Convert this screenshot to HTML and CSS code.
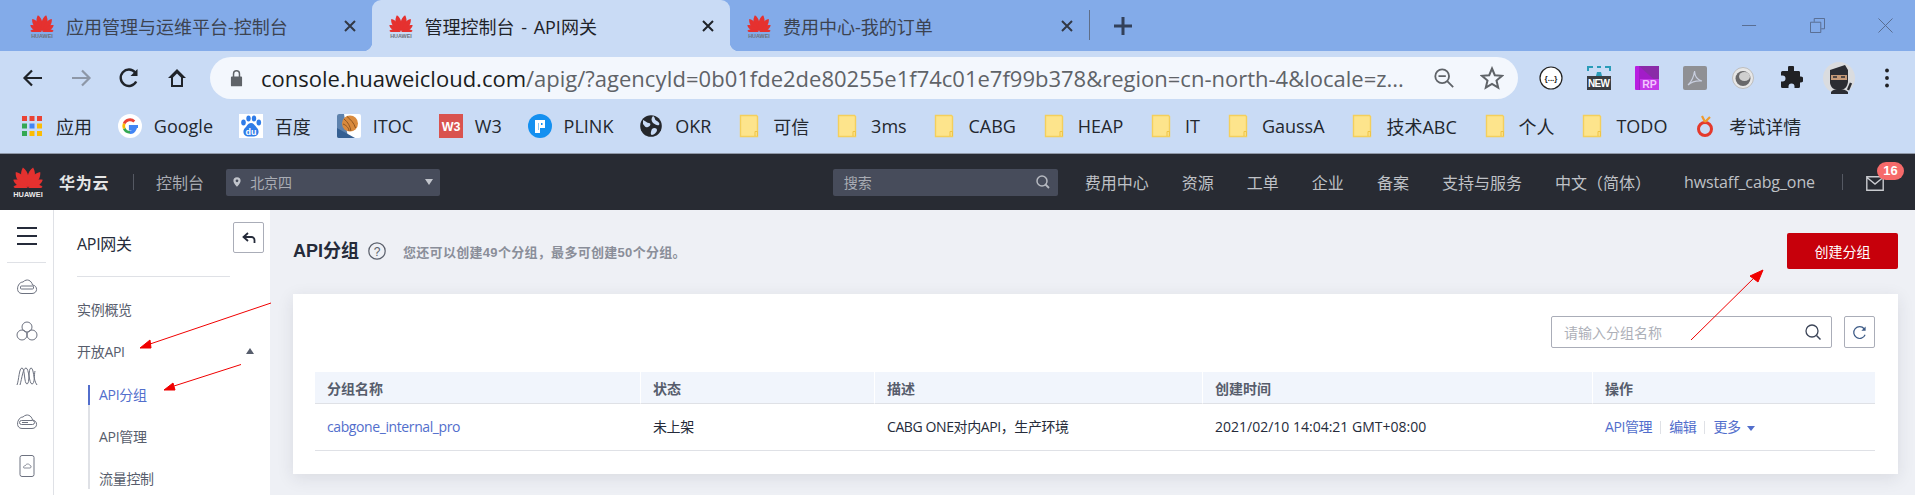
FILE: index.html
```html
<!DOCTYPE html>
<html lang="zh-CN">
<head>
<meta charset="utf-8">
<title>管理控制台 - API网关</title>
<link rel="stylesheet" href="styles.css">
</head>
<body>
<svg class="defs" width="0" height="0" aria-hidden="true">
  <defs>
    <symbol id="petals" viewBox="0 0 24 17">
      <g fill="#e5312f">
        <path d="M12 16.600C8.800 12.500 7.800 8.600 8.400 5.400 8.800 3.300 9.700 1.600 10.800 .4 12.800 2.400 13.900 4.900 13.800 7.800 13.700 10.800 12.800 14 12 16.600Z" transform="rotate(-10 12 17)"/>
        <path d="M12 16.600C8.800 12.500 7.800 8.600 8.400 5.400 8.800 3.300 9.700 1.600 10.800 .4 12.800 2.400 13.900 4.900 13.800 7.800 13.700 10.800 12.800 14 12 16.600Z" transform="rotate(-34 12 17) translate(12 17) scale(.95) translate(-12 -17)"/>
        <path d="M12 16.600C8.800 12.500 7.800 8.600 8.400 5.400 8.800 3.300 9.700 1.600 10.800 .4 12.800 2.400 13.900 4.900 13.800 7.800 13.700 10.800 12.800 14 12 16.600Z" transform="rotate(-58 12 17) translate(12 17) scale(.8) translate(-12 -17)"/>
        <path d="M12 16.600C8.800 12.500 7.800 8.600 8.400 5.400 8.800 3.300 9.700 1.600 10.800 .4 12.800 2.400 13.900 4.900 13.800 7.800 13.700 10.800 12.800 14 12 16.600Z" transform="rotate(-82 12 17) translate(12 17) scale(.7) translate(-12 -17)"/>
        <path d="M12 16.600C15.200 12.500 16.200 8.600 15.600 5.400 15.200 3.300 14.300 1.600 13.200 .4 11.200 2.400 10.100 4.900 10.200 7.800 10.300 10.800 11.200 14 12 16.600Z" transform="rotate(10 12 17)"/>
        <path d="M12 16.600C15.200 12.500 16.200 8.600 15.600 5.400 15.200 3.300 14.300 1.600 13.200 .4 11.200 2.400 10.100 4.900 10.200 7.800 10.300 10.800 11.200 14 12 16.600Z" transform="rotate(34 12 17) translate(12 17) scale(.95) translate(-12 -17)"/>
        <path d="M12 16.600C15.200 12.500 16.200 8.600 15.600 5.400 15.200 3.300 14.300 1.600 13.200 .4 11.200 2.400 10.100 4.900 10.200 7.800 10.300 10.800 11.200 14 12 16.600Z" transform="rotate(58 12 17) translate(12 17) scale(.8) translate(-12 -17)"/>
        <path d="M12 16.600C15.200 12.500 16.200 8.600 15.600 5.400 15.200 3.300 14.300 1.600 13.200 .4 11.200 2.400 10.100 4.900 10.200 7.800 10.300 10.800 11.200 14 12 16.600Z" transform="rotate(82 12 17) translate(12 17) scale(.7) translate(-12 -17)"/>
      </g>
    </symbol>
    <symbol id="favicon" viewBox="0 0 24 24">
      <use href="#petals" x="0" y="0" width="24" height="18"/>
      <text x="12" y="23.500" text-anchor="middle" font-size="5.400" font-weight="700" font-family="Liberation Sans, sans-serif" fill="#6c7078">HUAWEI</text>
    </symbol>
    <symbol id="folder" viewBox="0 0 24 24">
      <path d="M3.500 1.500H19.500L20.500 2.500V22.500H3.500Z" fill="#fde48c" stroke="#f4cf5c" stroke-width="1.400"/>
      <path d="M18 22V17.500H20.500V22" fill="none" stroke="#f0c445" stroke-width="1"/>
    </symbol>
  </defs>
</svg>

<div class="tabstrip">
  <div class="tab">
    <svg class="fav"><use href="#favicon"/></svg>
    <span class="tab-title">应用管理与运维平台-控制台</span>
    <svg class="tab-x" viewBox="0 0 12 12"><path d="M1 1 11 11M11 1 1 11"/></svg>
  </div>
  <div class="tab tab-active">
    <svg class="fav"><use href="#favicon"/></svg>
    <span class="tab-title">管理控制台 - API网关</span>
    <svg class="tab-x" viewBox="0 0 12 12"><path d="M1 1 11 11M11 1 1 11"/></svg>
  </div>
  <div class="tab">
    <svg class="fav"><use href="#favicon"/></svg>
    <span class="tab-title">费用中心-我的订单</span>
    <svg class="tab-x" viewBox="0 0 12 12"><path d="M1 1 11 11M11 1 1 11"/></svg>
  </div>
  <span class="tab-sep"></span>
  <svg class="tab-plus" viewBox="0 0 18 18"><path d="M9 0V18M0 9H18"/></svg>
  <div class="winctl">
    <svg viewBox="0 0 16 16"><path d="M0 8H15"/></svg>
    <svg viewBox="0 0 16 16"><path d="M.5 4.500H11.500V15.500H.5ZM4.500 4V.5H15.500V11.500H12"/></svg>
    <svg viewBox="0 0 16 16"><path d="M.5.5 15.500 15.500M15.500.5.5 15.500"/></svg>
  </div>
</div>

<div class="toolbar">
  <svg class="tool" viewBox="0 0 24 24"><path d="M21 12H4M11 4.500 3.500 12 11 19.500" fill="none" stroke="#1f2329" stroke-width="2.200"/></svg>
  <svg class="tool" viewBox="0 0 24 24"><path d="M3 12H20M13 4.500 20.500 12 13 19.500" fill="none" stroke="#8d97a7" stroke-width="2.200"/></svg>
  <svg class="tool" viewBox="0 0 24 24"><path d="M19.200 15.500A8.200 8.200 0 1 1 18.200 6.500" fill="none" stroke="#1f2329" stroke-width="2.400"/><path d="M20.500 3V10H13.500Z" fill="#1f2329"/></svg>
  <svg class="tool" viewBox="0 0 24 24"><path d="M12 3 3 12H6V21H18V12H21ZM8 11.500 12 7.500 16 11.500V19H8Z" fill="#1f2329"/></svg>
  <div class="omnibox">
    <svg class="lock" viewBox="0 0 14 18"><path d="M2 7.500H12A1 1 0 0 1 13 8.500V17A1 1 0 0 1 12 18H2A1 1 0 0 1 1 17V8.500A1 1 0 0 1 2 7.500Z" fill="#5f6368"/><path d="M3.800 8V4.500A3.200 3.200 0 0 1 10.200 4.500V8" fill="none" stroke="#5f6368" stroke-width="1.600"/></svg>
    <span class="url"><span class="url-host">console.huaweicloud.com</span>/apig/?agencyId=0b01fde2de80255e1f74c01e7f99b378&amp;region=cn-north-4&amp;locale=z...</span>
    <svg class="omni-zoom" viewBox="0 0 24 24"><circle cx="10" cy="10" r="7.500" fill="none" stroke="#5f6368" stroke-width="2"/><path d="M6 10H14M15.500 15.500 22 22" fill="none" stroke="#5f6368" stroke-width="2"/></svg>
    <svg class="omni-star" viewBox="0 0 24 24"><path d="M12 2.500 14.800 9.200 22 9.800 16.500 14.500 18.200 21.600 12 17.800 5.800 21.600 7.500 14.500 2 9.800 9.200 9.200Z" fill="none" stroke="#5f6368" stroke-width="2"/></svg>
  </div>
  <div class="exts">
    <svg viewBox="0 0 24 24"><circle cx="12" cy="12" r="11" fill="#fff" stroke="#222" stroke-width="1.200"/><text x="12" y="15" text-anchor="middle" font-size="8" font-weight="700" font-family="Liberation Sans, sans-serif" fill="#222">{...}</text></svg>
    <svg viewBox="0 0 24 24"><path d="M1 5V1H6M10 1H14M18 1H23V5" fill="none" stroke="#2a9cb8" stroke-width="2"/><rect x="0" y="10" width="24" height="14" fill="#3a3d42"/><text x="12" y="21" text-anchor="middle" font-size="10" font-weight="700" font-family="Liberation Sans, sans-serif" fill="#fff" textLength="22">NEW</text><path d="M9 10 10 6H14L15 10Z" fill="#2a9cb8"/></svg>
    <svg viewBox="0 0 24 24"><rect width="24" height="24" rx="1" fill="#b81ee0"/><path d="M4 0H24V24H4Z" fill="#a21cc8"/><path d="M4 0 24 18V0Z" fill="#8a2ba8"/><rect x="5" y="13" width="19" height="11" fill="#c43be8"/><text x="14.500" y="22" text-anchor="middle" font-size="10.500" font-weight="700" font-family="Liberation Sans, sans-serif" fill="#f3c6ff">RP</text></svg>
    <svg viewBox="0 0 24 24"><rect width="24" height="24" rx="2" fill="#8f9094"/><path d="M5 19C8 16 11 10 11.500 5 11.800 10 14 14 19 15 14 14.500 9 15.500 5 19Z" fill="none" stroke="#c9cfe0" stroke-width="1.200"/></svg>
    <svg viewBox="0 0 24 24"><circle cx="12" cy="12" r="10.500" fill="#e7e7e7" stroke="#bdbdbd"/><circle cx="12" cy="12.500" r="7.500" fill="#68686a"/><ellipse cx="13.500" cy="10.500" rx="5.500" ry="4.500" fill="#cfcfcf"/></svg>
    <svg viewBox="0 0 24 24"><path d="M9 1.500A3 3 0 0 1 15 2.500V5H20A1.500 1.500 0 0 1 21 6.500V10.500H21.500A3 3 0 0 1 21.500 16.500H21V20.500A1.500 1.500 0 0 1 19.500 22H15.500V20.500A3 3 0 0 0 9.500 20.500V22H3.500A1.500 1.500 0 0 1 2 20.500V15.500H3.500A3 3 0 0 0 3.500 9.500H2V6.500A1.500 1.500 0 0 1 3.500 5H9Z" fill="#202124"/></svg>
    <svg class="avatar" viewBox="0 0 32 32"><circle cx="16" cy="16" r="16" fill="#dadcdf"/><path d="M7 8 22 3 25 8 25 20C24 26 21 28 16 28 11 28 8 26 7 21Z" fill="#2b2d33"/><rect x="8" y="13" width="16" height="5" fill="#c59a78"/><path d="M10 15H14M18 15H22" stroke="#2b2d33" stroke-width="1.500"/><path d="M8 30C10 26 22 26 25 30V32H8Z" fill="#2b2d33"/><path d="M25 28 28 21" stroke="#2b2d33" stroke-width="2.400"/></svg>
    <svg class="dots" viewBox="0 0 6 24"><circle cx="3" cy="3" r="2.300" fill="#202124"/><circle cx="3" cy="12" r="2.300" fill="#202124"/><circle cx="3" cy="21" r="2.300" fill="#202124"/></svg>
  </div>
</div>

<div class="bookmarks">
  <a class="bm"><svg class="bm-ico" viewBox="0 0 24 24"><g fill="#ea4335"><rect x="2" y="2" width="5" height="5"/><rect x="9.500" y="2" width="5" height="5"/><rect x="17" y="2" width="5" height="5"/></g><rect x="2" y="9.500" width="5" height="5" fill="#34a853"/><rect x="9.500" y="9.500" width="5" height="5" fill="#4285f4"/><rect x="17" y="9.500" width="5" height="5" fill="#fbbc05"/><rect x="2" y="17" width="5" height="5" fill="#34a853"/><rect x="9.500" y="17" width="5" height="5" fill="#fbbc05"/><rect x="17" y="17" width="5" height="5" fill="#fbbc05"/></svg>应用</a>
  <a class="bm"><svg class="bm-ico" viewBox="0 0 24 24"><circle cx="12" cy="12" r="12" fill="#fff"/><path d="M20 12.500H12.300V15.200H17A5.300 5.300 0 0 1 12 18.500" fill="none" stroke="#4285f4" stroke-width="2.800"/><path d="M12 18.300A6.300 6.300 0 0 1 6.200 14.500" fill="none" stroke="#34a853" stroke-width="2.800"/><path d="M6.200 14.500A6.500 6.500 0 0 1 6.200 9.500" fill="none" stroke="#fbbc05" stroke-width="2.800"/><path d="M6.200 9.500A6.300 6.300 0 0 1 16.300 7.500" fill="none" stroke="#ea4335" stroke-width="2.800"/></svg>Google</a>
  <a class="bm"><svg class="bm-ico" viewBox="0 0 24 24"><rect width="24" height="24" fill="#fff"/><g fill="#2f7ce8"><ellipse cx="4.500" cy="8.500" rx="2.300" ry="3"/><ellipse cx="9.500" cy="4.500" rx="2.200" ry="3"/><ellipse cx="15" cy="4.500" rx="2.200" ry="3"/><ellipse cx="19.800" cy="8.500" rx="2.300" ry="3"/><path d="M12 9C9 9 8 12 6 14 3 17 4.500 22.500 9 22.500H15C19.500 22.500 21 17 18 14 16 12 15 9 12 9Z"/></g><text x="12" y="20.500" text-anchor="middle" font-size="9" font-weight="700" font-family="Liberation Sans, sans-serif" fill="#fff">du</text></svg>百度</a>
  <a class="bm"><svg class="bm-ico" viewBox="0 0 24 24"><rect width="24" height="24" rx="2" fill="#fff"/><path d="M0 2Q0 0 2 0H7L11 24H2Q0 24 0 22Z" fill="#5d82ad"/><path d="M0 14 18 24H2Q0 24 0 22Z" fill="#345f92"/><circle cx="13" cy="9.500" r="8" fill="#d98a3d"/><path d="M7 5C11 8 13 12 14 17M10 2.500C14 6 17 9 18.500 14M6 10C9 11 12 14 12 17" fill="none" stroke="#8d5420" stroke-width="1"/></svg>ITOC</a>
  <a class="bm"><svg class="bm-ico" viewBox="0 0 24 24"><rect width="24" height="24" fill="#d9534f"/><text x="12" y="17" text-anchor="middle" font-size="12.500" font-weight="700" font-family="Liberation Sans, sans-serif" fill="#fff">W3</text></svg>W3</a>
  <a class="bm"><svg class="bm-ico" viewBox="0 0 24 24"><circle cx="12" cy="12" r="12" fill="#1490f0"/><path d="M7 6H17V14H12V19H7ZM10 9V16H10.500V9ZM13 9V11H14.500V9Z" fill="#fff" fill-rule="evenodd"/></svg>PLINK</a>
  <a class="bm"><svg class="bm-ico" viewBox="0 0 24 24"><circle cx="12" cy="12" r="10.800" fill="#25272b"/><path d="M4 6C7 7 8 9 10 9S12 12 9 13 6 12 4 10ZM14 2C17 4 15 6 18 7 20 8 21 10 20 11 18 12 16 10 14 9 12 7 12 4 14 2ZM13 15C15 13 18 14 18 16S15 21 13 21 12 17 13 15Z" fill="#c9dbf5"/></svg>OKR</a>
  <a class="bm"><svg class="bm-ico"><use href="#folder"/></svg>可信</a>
  <a class="bm"><svg class="bm-ico"><use href="#folder"/></svg>3ms</a>
  <a class="bm"><svg class="bm-ico"><use href="#folder"/></svg>CABG</a>
  <a class="bm"><svg class="bm-ico"><use href="#folder"/></svg>HEAP</a>
  <a class="bm"><svg class="bm-ico"><use href="#folder"/></svg>IT</a>
  <a class="bm"><svg class="bm-ico"><use href="#folder"/></svg>GaussA</a>
  <a class="bm"><svg class="bm-ico"><use href="#folder"/></svg>技术ABC</a>
  <a class="bm"><svg class="bm-ico"><use href="#folder"/></svg>个人</a>
  <a class="bm"><svg class="bm-ico"><use href="#folder"/></svg>TODO</a>
  <a class="bm"><svg class="bm-ico" viewBox="0 0 24 24"><circle cx="12" cy="15" r="6.500" fill="none" stroke="#e4392c" stroke-width="3"/><path d="M12 8 9 2M12 8 17 3" fill="none" stroke="#f09a2c" stroke-width="2.200"/></svg>考试详情</a>
</div>

<header class="topbar">
  <svg class="logo" viewBox="0 0 30 32">
    <use href="#petals" x="0" y="0" width="30" height="22"/>
    <text x="15" y="31" text-anchor="middle" font-size="7.400" font-weight="700" font-family="Liberation Sans, sans-serif" fill="#e8e8e8">HUAWEI</text>
  </svg>
  <span class="brand">华为云</span>
  <span class="brand-sep"></span>
  <span class="brand-console">控制台</span>
  <div class="region">
    <svg class="pin" viewBox="0 0 10 12"><path d="M5 0A4.500 4.500 0 0 1 9.500 4.500C9.500 7.500 5 12 5 12S.5 7.500.5 4.500A4.500 4.500 0 0 1 5 0Z" fill="#c2c5cc"/><circle cx="5" cy="4.500" r="1.700" fill="#474c5b"/></svg>
    <span class="region-name">北京四</span>
    <span class="caret-down"></span>
  </div>
  <div class="top-search">
    <span>搜索</span>
    <svg viewBox="0 0 14 14"><circle cx="6" cy="6" r="5" fill="none" stroke="#b6b9c0" stroke-width="1.500"/><path d="M9.500 9.500 13 13" stroke="#b6b9c0" stroke-width="1.800"/></svg>
  </div>
  <nav class="top-nav">
    <a>费用中心</a><a>资源</a><a>工单</a><a>企业</a><a>备案</a><a>支持与服务</a><a>中文（简体）</a><a class="top-user">hwstaff_cabg_one</a>
  </nav>
  <span class="top-sep"></span>
  <div class="mail">
    <svg viewBox="0 0 18 15"><path d="M.8.8H17.200V14.200H.8ZM1 1.500 9 8 17 1.500" fill="none" stroke="#c9cbd0" stroke-width="1.400"/></svg>
    <span class="badge">16</span>
  </div>
</header>

<div class="workspace">
  <aside class="rail">
    <svg class="burger" viewBox="0 0 20 18"><path d="M0 1H20M0 9H20M0 17H20" stroke="#252b3a" stroke-width="2"/></svg>
    <div class="rail-line"></div>
    <svg class="rail-ico" viewBox="0 0 22 18"><path d="M6 16.500H16C22 16.500 22 8.500 16.500 8 15.500 3.500 11 1 7 5 1 5 -1 16.500 6 16.500Z" fill="none" stroke="#6d7280" stroke-width="1"/><rect x="4.500" y="9" width="13" height="3" rx="1" fill="none" stroke="#6d7280"/></svg>
    <svg class="rail-ico" viewBox="0 0 22 20"><g fill="none" stroke="#6d7280" stroke-width="1"><circle cx="11" cy="6" r="5"/><circle cx="6" cy="14" r="5"/><circle cx="16" cy="14" r="5"/></g></svg>
    <svg class="rail-ico" viewBox="0 0 22 20"><path d="M1 19C3 14 3 2 6 2S8 18 11 18 12 2 15 2 17 14 21 19M4 19C6 12 7 2 10 2S13 18 16 18 18 8 19 5" fill="none" stroke="#6d7280" stroke-width="1"/></svg>
    <svg class="rail-ico" viewBox="0 0 22 18"><path d="M6 16.500H16C22 16.500 22 8.500 16.500 8 15.500 3.500 11 1 7 5 1 5 -1 16.500 6 16.500Z" fill="none" stroke="#6d7280" stroke-width="1"/><rect x="3.500" y="8.500" width="15" height="4" rx="2" fill="none" stroke="#6d7280"/><path d="M6 10.500H12" stroke="#6d7280"/></svg>
    <svg class="rail-ico" viewBox="0 0 22 22"><rect x="4" y="0.500" width="14" height="21" rx="2" fill="none" stroke="#6d7280"/><path d="M8 13H14C15.500 13 15.500 10.500 14 10.500 13.500 8.500 10 8.500 9.500 10.500 7.500 10.500 7 13 8 13Z" fill="none" stroke="#6d7280" stroke-width=".8"/></svg>
  </aside>

  <aside class="sidenav">
    <div class="side-head">
      <span class="side-title">API网关</span>
      <button class="side-back"><svg viewBox="0 0 14 12"><path d="M6 1 1.500 5 6 9M2 5H9.500A3 3 0 0 1 12.500 8V11" fill="none" stroke="#252b3a" stroke-width="1.800"/></svg></button>
    </div>
    <div class="side-line"></div>
    <a class="side-item">实例概览</a>
    <a class="side-item side-open">开放API<span class="caret-up"></span></a>
    <div class="side-sub">
      <a class="sub-item sub-active">API分组</a>
      <a class="sub-item">API管理</a>
      <a class="sub-item">流量控制</a>
    </div>
  </aside>

  <main class="main">
    <div class="page-head">
      <h1 class="page-title">API分组</h1>
      <svg class="help" viewBox="0 0 18 18"><circle cx="9" cy="9" r="8.200" fill="none" stroke="#5a5f6b" stroke-width="1.200"/><text x="9" y="13.500" text-anchor="middle" font-size="12" font-family="Liberation Sans, sans-serif" fill="#5a5f6b">?</text></svg>
      <span class="page-hint">您还可以创建49个分组，最多可创建50个分组。</span>
      <button class="btn-create">创建分组</button>
    </div>
    <section class="card">
      <div class="card-tools">
        <div class="search-box">
          <span>请输入分组名称</span>
          <svg viewBox="0 0 16 16"><circle cx="7" cy="7" r="6" fill="none" stroke="#3c4558" stroke-width="1.300"/><path d="M11.500 11.500 15.500 15.500" stroke="#3c4558" stroke-width="1.500"/></svg>
        </div>
        <button class="btn-refresh"><svg viewBox="0 0 16 16"><path d="M14 10.500A6.300 6.300 0 1 1 13 4" fill="none" stroke="#3c5a86" stroke-width="1.300"/><path d="M14.500 1.500V6H10Z" fill="#3c5a86"/></svg></button>
      </div>
      <table class="grid">
        <colgroup><col class="c1"><col class="c2"><col class="c3"><col class="c4"><col class="c5"></colgroup>
        <thead><tr><th>分组名称</th><th>状态</th><th>描述</th><th>创建时间</th><th>操作</th></tr></thead>
        <tbody>
          <tr>
            <td><a class="link">cabgone_internal_pro</a></td>
            <td>未上架</td>
            <td>CABG ONE对内API，生产环境</td>
            <td class="time">2021/02/10 14:04:21 GMT+08:00</td>
            <td class="ops"><a class="link">API管理</a><span class="op-sep"></span><a class="link">编辑</a><span class="op-sep"></span><a class="link">更多</a><span class="caret-more"></span></td>
          </tr>
        </tbody>
      </table>
    </section>
  </main>
</div>

<svg class="notes" viewBox="0 0 1915 495" aria-hidden="true">
  <g stroke="#f00000" stroke-width="1" fill="#f00000">
    <path d="M271 303 150 344" fill="none"/>
    <path d="M140 348 150 340 151 348Z"/>
    <path d="M241 364.500 174 386" fill="none"/>
    <path d="M164 390 173 383 175 390Z"/>
    <path d="M1691 340 1757 275" fill="none"/>
    <path d="M1763 270 1750 276 1758 282Z"/>
  </g>
</svg>
</body>
</html>
```

FILE: styles.css
```css
* { box-sizing: border-box; }
html, body { margin: 0; padding: 0; }
body {
  width: 1915px;
  height: 495px;
  overflow: hidden;
  position: relative;
  background: #eef0f5;
  font-family: "Liberation Sans", "Noto Sans CJK SC", sans-serif;
  color: #252b3a;
}
.defs { position: absolute; }
button { font: inherit; padding: 0; cursor: pointer; }
h1 { margin: 0; }

/* browser chrome */
.tabstrip {
  height: 51px;
  background: #83abe9;
  display: flex;
  align-items: stretch;
  padding-left: 13px;
}
.tab {
  width: 358.500px;
  display: flex;
  align-items: center;
  padding: 0 16px 0 17px;
  position: relative;
  font-family: "Open Sans", "Noto Sans CJK SC", sans-serif;
  font-size: 18px;
  color: #3c4350;
}
.tab-active {
  background: #c9dbf5;
  border-radius: 9px 9px 0 0;
  color: #1f2329;
}
.tab-active::before, .tab-active::after {
  content: "";
  position: absolute;
  bottom: 0;
  width: 9px;
  height: 9px;
}
.tab-active::before { left: -9px; background: radial-gradient(circle at 0 0, transparent 9px, #c9dbf5 9.500px); }
.tab-active::after { right: -9px; background: radial-gradient(circle at 100% 0, transparent 9px, #c9dbf5 9.500px); }
.fav { width: 24px; height: 24px; flex: none; }
.tab-title { margin-left: 12px; flex: 1; white-space: nowrap; word-spacing: 2px; }
.tab-x { width: 12px; height: 12px; flex: none; }
.tab-x path { stroke: #323845; stroke-width: 2; fill: none; }
.tab-active .tab-x path { stroke: #1f2329; }
.tab-sep { width: 1px; height: 30px; background: #5f6e88; align-self: center; margin-top: -1px; }
.tab-plus { width: 18px; height: 18px; align-self: center; margin-left: 24px; }
.tab-plus path { stroke: #33415a; stroke-width: 3; fill: none; }
.winctl {
  margin-left: auto;
  display: flex;
  align-items: center;
  gap: 53px;
  padding: 0 22px 0 0;
  margin-top: -1px;
}
.winctl svg { width: 15px; height: 15px; }
.winctl path { stroke: #566a8d; stroke-width: 1; fill: none; }

.toolbar {
  height: 48px;
  background: #c9dbf5;
  display: flex;
  align-items: flex-start;
  padding: 6px 0 0 21px;
}
.tool { width: 24px; height: 24px; margin: 9px 24px 0 0; flex: none; }
.toolbar .tool:nth-child(4) { margin-right: 21px; }
.omnibox {
  width: 1308px;
  height: 42px;
  background: #f3f7fd;
  border-radius: 21px;
  display: flex;
  align-items: center;
  padding-left: 20px;
  flex: none;
}
.lock { width: 13px; height: 18px; flex: none; }
.url {
  margin-left: 18px;
  width: 1147px;
  font-family: "Open Sans", sans-serif;
  font-size: 22px;
  color: #5f6368;
  white-space: nowrap;
  overflow: hidden;
}
.url-host { color: #1b1d21; }
.omni-zoom { width: 22px; height: 22px; margin-left: 25px; flex: none; }
.omni-star { width: 24px; height: 24px; margin-left: 25px; flex: none; }
.exts {
  display: flex;
  align-items: center;
  height: 42px;
  margin-left: 21px;
  gap: 24px;
}
.exts svg { width: 24px; height: 24px; flex: none; }
.exts .avatar { width: 32px; height: 32px; margin-left: -4px; margin-right: -4px; }
.exts .dots { width: 6px; height: 20px; margin-left: 9px; }

.bookmarks {
  height: 55px;
  background: #c9dbf5;
  border-bottom: 1px solid #8f98a8;
  display: flex;
  align-items: center;
  gap: 25.850px;
  padding-left: 20px;
  font-family: "Open Sans", "Noto Sans CJK SC", sans-serif;
  font-size: 18px;
  color: #23272e;
}
.bm { display: flex; align-items: center; gap: 12px; white-space: nowrap; }
.bm-ico { width: 24px; height: 24px; flex: none; }

/* console header */
.topbar {
  height: 56px;
  background: #282b33;
  display: flex;
  align-items: center;
  padding-left: 13px;
  color: #c3c5ca;
}
.logo { width: 30px; height: 32px; flex: none; }
.brand { margin-left: 16px; font-size: 16px; font-weight: 700; color: #e6e6e6; letter-spacing: .7px; }
.brand-sep { width: 1px; height: 16px; background: #555963; margin-left: 24px; }
.brand-console { margin-left: 22px; font-size: 16px; color: #a9abb2; }
.region {
  margin-left: 22px;
  width: 214px;
  height: 27px;
  background: #474c5b;
  border-radius: 2px;
  display: flex;
  align-items: center;
  padding: 0 7px 0 7px;
}
.pin { width: 8px; height: 10px; flex: none; }
.region-name { margin-left: 9px; font-size: 14px; color: #a9acb4; }
.caret-down {
  margin-left: auto;
  width: 0;
  height: 0;
  border-left: 4px solid transparent;
  border-right: 4px solid transparent;
  border-top: 6px solid #c2c5cc;
}
.top-search {
  margin-left: auto;
  width: 225px;
  height: 27px;
  background: #474c5b;
  border-radius: 2px;
  display: flex;
  align-items: center;
  justify-content: space-between;
  padding: 0 8px 0 11px;
  font-size: 14px;
  color: #a9acb4;
}
.top-search svg { width: 14px; height: 14px; }
.top-nav {
  display: flex;
  align-items: center;
  gap: 33px;
  margin-left: 27px;
  font-size: 16px;
  white-space: nowrap;
  color: #bfc1c6;
}
.top-user { font-family: "Open Sans", sans-serif; letter-spacing: -.1px; }
.top-sep { width: 1px; height: 16px; background: #555963; margin-left: 27px; }
.mail { position: relative; width: 18px; height: 15px; margin: 2px 31px 0 23px; }
.mail svg { width: 18px; height: 15px; display: block; }
.badge {
  position: absolute;
  left: 11px;
  top: -14px;
  width: 27px;
  height: 18px;
  border-radius: 9px;
  background: #f66a6a;
  color: #fff;
  font-size: 13px;
  font-weight: 700;
  line-height: 18px;
  text-align: center;
}

/* workspace */
.workspace { display: flex; height: 285px; overflow: hidden; }
.rail {
  width: 54px;
  flex: none;
  background: #fff;
  border-right: 1px solid #dfe1e6;
  display: flex;
  flex-direction: column;
  align-items: center;
  padding-top: 17px;
}
.burger { width: 20px; height: 18px; flex: none; }
.rail-line { width: 39px; height: 1px; background: #dfe1e6; margin: 17px 0 12px; flex: none; }
.rail-ico { width: 22px; height: 22px; flex: none; margin-bottom: 23px; }
.sidenav {
  width: 216px;
  flex: none;
  background: #fff;
  padding-top: 12px;
  font-family: "Open Sans", "Noto Sans CJK SC", sans-serif;
  font-size: 14px;
}
.side-head { display: flex; justify-content: space-between; padding: 0 6px 0 23px; height: 31px; }
.side-title { font-size: 16px; line-height: 22px; margin-top: 11px; letter-spacing: -.3px; }
.side-back {
  width: 31px;
  height: 31px;
  background: #fff;
  border: 1px solid #aaadb8;
  border-radius: 2px;
  display: flex;
  align-items: center;
  justify-content: center;
}
.side-back svg { width: 14px; height: 12px; }
.side-line { height: 1px; background: #dfe1e6; margin: 23px 40px 0 23px; }
.side-item {
  display: flex;
  align-items: center;
  height: 42px;
  padding-left: 23px;
  letter-spacing: -.3px;
  color: #575d6c;
}
.side-item:first-of-type { margin-top: 11px; }
.caret-up {
  margin-left: auto;
  margin-right: 16px;
  width: 0;
  height: 0;
  border-left: 4.500px solid transparent;
  border-right: 4.500px solid transparent;
  border-bottom: 6px solid #575d6c;
}
.side-sub {
  margin: 13px 0 0 34px;
  border-left: 2px solid #dfe1e6;
  display: flex;
  flex-direction: column;
  gap: 22px;
}
.sub-item { line-height: 20px; padding-left: 9px; letter-spacing: -.3px; color: #575d6c; }
.sub-active { color: #526ecc; border-left: 2px solid #526ecc; margin-left: -2px; }

/* main */
.main { flex: 1; min-width: 0; padding: 23px 17px 0 23px; }
.page-head { display: flex; align-items: center; height: 36px; }
.page-title { font-size: 18px; font-weight: 700; line-height: 36px; color: #252b3a; }
.help { width: 18px; height: 18px; margin-left: 9px; flex: none; }
.page-hint { margin-left: 17px; font-size: 13px; font-weight: 700; letter-spacing: .3px; color: #8a8e99; }
.btn-create {
  margin-left: auto;
  width: 111px;
  height: 36px;
  background: #c7000b;
  border: 0;
  border-radius: 2px;
  color: #fff;
  font-size: 14px;
}
.card {
  margin-top: 25px;
  height: 180px;
  background: #fff;
  padding: 22px 23px 0 22px;
  box-shadow: 0 4px 16px rgba(37, 43, 58, .1);
}
.card-tools { display: flex; justify-content: flex-end; gap: 12px; height: 32px; margin-bottom: 24px; }
.search-box {
  width: 281px;
  height: 32px;
  border: 1px solid #aaadb8;
  border-radius: 2px;
  display: flex;
  align-items: center;
  justify-content: space-between;
  padding: 0 10px 0 12px;
  font-size: 14px;
  color: #adb0b8;
}
.search-box svg { width: 16px; height: 16px; }
.btn-refresh {
  width: 31px;
  height: 32px;
  background: #fff;
  border: 1px solid #aaadb8;
  border-radius: 2px;
  display: flex;
  align-items: center;
  justify-content: center;
}
.btn-refresh svg { width: 15px; height: 15px; }
.grid {
  width: 1560px;
  border-collapse: separate;
  border-spacing: 0;
  table-layout: fixed;
  font-family: "Open Sans", "Noto Sans CJK SC", sans-serif;
  font-size: 14px;
}
.c1 { width: 326px; }
.c2 { width: 234px; }
.c3 { width: 328px; }
.c4 { width: 390px; }
.c5 { width: 282px; }
.grid th {
  height: 32px;
  background: #f1f5fc;
  border-bottom: 1px solid #dfe1e6;
  border-right: 1px solid #fff;
  text-align: left;
  padding: 0 12px;
  font-weight: 700;
  color: #575d6c;
}
.grid th:last-child { border-right: 0; }
.grid td {
  height: 47px;
  border-bottom: 1px solid #dfe1e6;
  padding: 0 12px 2px;
  letter-spacing: -.4px;
  color: #252b3a;
  white-space: nowrap;
}
.grid .time { letter-spacing: 0; }
.link { color: #526ecc; }
.op-sep { display: inline-block; width: 1px; height: 13px; background: #dfe1e6; margin: 0 8px; vertical-align: -2px; }
.caret-more {
  display: inline-block;
  margin-left: 6px;
  width: 0;
  height: 0;
  border-left: 4px solid transparent;
  border-right: 4px solid transparent;
  border-top: 5px solid #526ecc;
  vertical-align: 1px;
}

/* hand-drawn annotations over the screenshot */
.notes { position: absolute; left: 0; top: 0; width: 1915px; height: 495px; pointer-events: none; }
```
